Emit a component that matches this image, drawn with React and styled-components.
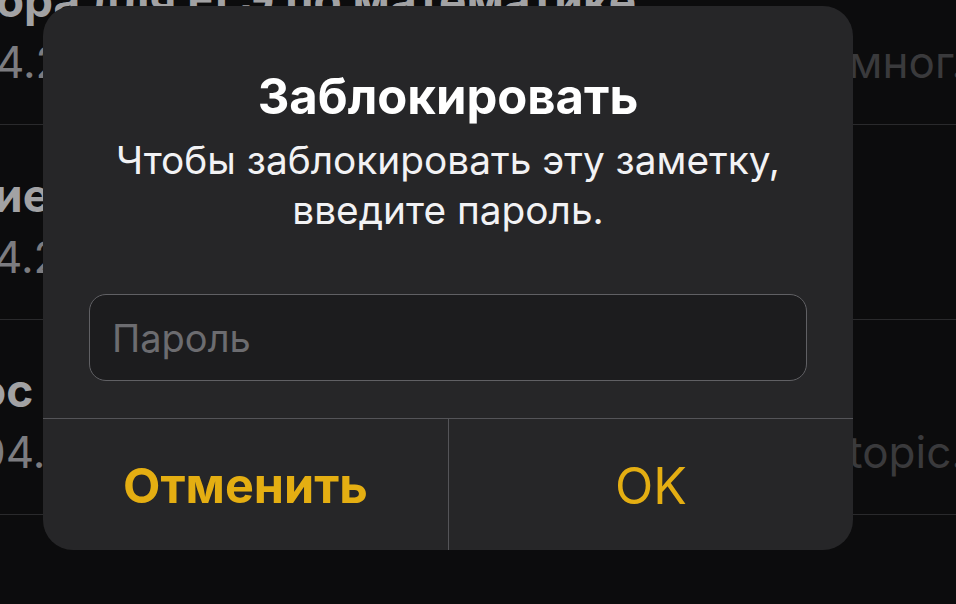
import React from "react";
import styled, { createGlobalStyle } from "styled-components";

const GlobalStyle = createGlobalStyle`
  html, body {
    margin: 0;
    padding: 0;
    background: #0c0c0d;
  }
  body {
    font-family: Inter, "Noto Sans", "Liberation Sans", sans-serif;
  }
`;

// Screen behind the alert
const Screen = styled.div`
  position: relative;
  width: 956px;
  height: 604px;
  overflow: hidden;
  background: #0c0c0d;
`;

const NotesList = styled.div`
  display: flex;
  flex-direction: column;
  margin-top: -70px;
`;

const NoteRow = styled.div`
  height: 195px;
  box-sizing: border-box;
  border-bottom: 1px solid #2a2a2c;
  display: flex;
  flex-direction: column;
  padding-top: 44px;
`;

const NoteInner = styled.div`
  display: flex;
  flex-direction: column;
  margin-left: ${(p) => p.$shift || 0}px;
  margin-right: -8px;
`;

const NoteTitle = styled.div`
  font-size: 46px;
  font-weight: 700;
  line-height: 52px;
  color: #a2a2a4;
  white-space: nowrap;
`;

const NoteMeta = styled.div`
  display: flex;
  gap: 24px;
  margin-top: 11px;
  font-size: 44px;
  line-height: 50px;
  white-space: nowrap;
`;

const NoteDate = styled.span`
  color: #7c7c80;
`;

const NotePreview = styled.span`
  flex: 1;
  min-width: 0;
  overflow: hidden;
  text-align: right;
  color: #3a3a3c;
`;

// Alert
const Alert = styled.div`
  position: absolute;
  left: 43px;
  top: 6px;
  width: 810px;
  height: 544px;
  border-radius: 30px;
  background: #262628;
  display: flex;
  flex-direction: column;
  overflow: hidden;
`;

const AlertBody = styled.div`
  display: flex;
  flex-direction: column;
  align-items: center;
  padding: 65px 46px 37px;
`;

const AlertTitle = styled.h2`
  margin: 0;
  font-size: 49px;
  line-height: 52px;
  font-weight: 700;
  color: #ffffff;
`;

const AlertText = styled.p`
  margin: 12px 0 0;
  font-size: 38.8px;
  line-height: 50px;
  font-weight: 400;
  color: #f2f2f4;
  text-align: center;
`;

const PasswordInput = styled.input`
  margin-top: 59px;
  width: 100%;
  height: 87px;
  box-sizing: border-box;
  border: 1px solid #606064;
  border-radius: 17px;
  background: #1c1c1e;
  padding: 0 22px;
  font-family: inherit;
  font-size: 38px;
  color: #fff;
  outline: none;

  &::placeholder {
    color: #6c6c70;
  }
`;

const ButtonRow = styled.div`
  flex: 1;
  display: grid;
  grid-template-columns: 405px 1fr;
  border-top: 1px solid #545458;
`;

const AlertButton = styled.button`
  border: none;
  background: transparent;
  font-family: inherit;
  font-size: ${(p) => (p.$bold ? 48.5 : 50)}px;
  font-weight: ${(p) => (p.$bold ? 700 : 400)};
  color: #e4ae12;
  padding: 2px 0 0;
  cursor: pointer;

  & + & {
    border-left: 1px solid #545458;
  }
`;

const notes = [
  { title: "бра для ЕГЭ по математике", date: "4.21", preview: "задания и мног.", shift: -4 },
  { title: "ие задачи по геометрии", date: "4.21", preview: "", shift: -6 },
  { title: "ос к экзамену", date: "04.21", preview: "every topic.", shift: -22 },
];

export default function App() {
  return (
    <>
      <GlobalStyle />
      <Screen>
        <NotesList>
          {notes.map((n) => (
            <NoteRow key={n.title}>
              <NoteInner $shift={n.shift}>
                <NoteTitle>{n.title}</NoteTitle>
                <NoteMeta>
                  <NoteDate>{n.date}</NoteDate>
                  <NotePreview>{n.preview}</NotePreview>
                </NoteMeta>
              </NoteInner>
            </NoteRow>
          ))}
        </NotesList>

        <Alert>
          <AlertBody>
            <AlertTitle>Заблокировать</AlertTitle>
            <AlertText>
              Чтобы заблокировать эту заметку,
              <br />
              введите пароль.
            </AlertText>
            <PasswordInput type="password" placeholder="Пароль" />
          </AlertBody>
          <ButtonRow>
            <AlertButton $bold>Отменить</AlertButton>
            <AlertButton>OK</AlertButton>
          </ButtonRow>
        </Alert>
      </Screen>
    </>
  );
}
